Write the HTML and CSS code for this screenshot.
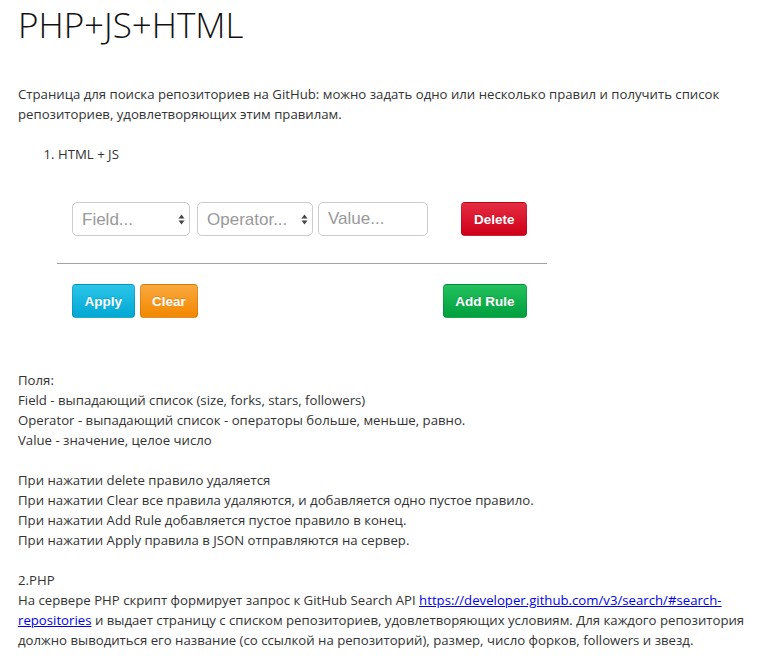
FILE: index.html
```html
<!DOCTYPE html>
<html lang="ru">
<head>
<meta charset="utf-8">
<title>PHP+JS+HTML</title>
<link rel="stylesheet" href="styles.css">
</head>
<body>
<h1 class="title">PHP+JS+HTML</h1>
<p class="intro">Страница для поиска репозиториев на GitHub: можно задать одно или несколько правил и получить список репозиториев, удовлетворяющих этим правилам.</p>
<ol class="parts">
  <li>HTML + JS
    <div class="builder">
      <div class="rule">
        <span class="select field">
          <select><option>Field...</option></select>
          <svg class="arrows" width="7" height="11" viewBox="0 0 7 11"><polygon points="0.5,4.5 3.5,0.5 6.5,4.5"/><polygon points="0.5,6.5 3.5,10.5 6.5,6.5"/></svg>
        </span>
        <span class="select operator">
          <select><option>Operator...</option></select>
          <svg class="arrows" width="7" height="11" viewBox="0 0 7 11"><polygon points="0.5,4.5 3.5,0.5 6.5,4.5"/><polygon points="0.5,6.5 3.5,10.5 6.5,6.5"/></svg>
        </span>
        <input class="value" type="text" placeholder="Value...">
        <button class="btn btn-delete">Delete</button>
      </div>
      <hr class="divider">
      <div class="actions">
        <button class="btn btn-apply">Apply</button>
        <button class="btn btn-clear">Clear</button>
        <button class="btn btn-add">Add Rule</button>
      </div>
    </div>
  </li>
</ol>
<p class="notes">Поля:<br>
Field - выпадающий список (size, forks, stars, followers)<br>
Operator - выпадающий список - операторы больше, меньше, равно.<br>
Value - значение, целое число<br>
<br>
При нажатии delete правило удаляется<br>
При нажатии Clear все правила удаляются, и добавляется одно пустое правило.<br>
При нажатии Add Rule добавляется пустое правило в конец.<br>
При нажатии Apply правила в JSON отправляются на сервер.<br>
<br>
2.PHP<br>
На сервере PHP скрипт формирует запрос к GitHub Search API <a href="#">https://developer.github.com/v3/search/#search-repositories</a> и выдает страницу с списком репозиториев, удовлетворяющих условиям. Для каждого репозитория должно выводиться его название (со ссылкой на репозиторий), размер, число форков, followers и звезд.</p>
</body>
</html>
```

FILE: styles.css
```css
html, body {
  background: #fff;
}

body {
  margin: 0;
  padding: 3px 8px 0 18px;
  font-family: "Open Sans", "Noto Sans", sans-serif;
  font-size: 13.2px;
  line-height: 20px;
  color: #333;
}

.title {
  margin: 0;
  font-size: 35px;
  line-height: 44px;
  font-weight: 300;
  color: #111;
}

.intro {
  margin: 37px 0 0;
}

.parts {
  margin: 20px 0 0;
  padding-left: 40px;
}

.builder {
  width: 490px;
  margin: 38px 0 0 -1px;
}

.rule,
.actions {
  display: flex;
  align-items: center;
  padding: 0 20px 0 15px;
}

.select {
  position: relative;
  display: block;
  height: 34px;
}

.select select,
.value {
  box-sizing: border-box;
  width: 100%;
  height: 34px;
  margin: 0;
  padding: 0 9px;
  border: 1px solid #ccc;
  border-radius: 5px;
  background: #fff;
  font-family: "Liberation Sans", Arial, sans-serif;
  font-size: 17px;
  color: #999;
  appearance: none;
  -webkit-appearance: none;
  outline: none;
}

.field {
  width: 118px;
  margin-right: 7px;
}

.operator {
  width: 116px;
  margin-right: 5px;
}

.value {
  width: 110px;
}

.value::placeholder {
  color: #999;
}

.arrows {
  position: absolute;
  right: 5px;
  top: 12px;
  fill: #444;
  pointer-events: none;
}

.btn {
  box-sizing: border-box;
  height: 34px;
  padding: 0 11.5px;
  border: 1px solid rgba(0, 0, 0, 0.12);
  border-radius: 4px;
  font-family: "Liberation Sans", Arial, sans-serif;
  font-size: 13.5px;
  font-weight: bold;
  color: #fff;
  text-shadow: 0 -1px 0 rgba(0, 0, 0, 0.15);
  cursor: pointer;
}

.btn-delete {
  margin-left: auto;
  background: linear-gradient(#e52c42, #cf0019);
}

.btn-apply {
  background: linear-gradient(#2cc4e9, #00a8d3);
}

.btn-clear {
  margin-left: 5px;
  background: linear-gradient(#f9a83f, #f48800);
}

.btn-add {
  margin-left: auto;
  background: linear-gradient(#22c15d, #00a03f);
}

.divider {
  margin: 27px 0 20px;
  border: 0;
  border-top: 1px solid #a3a3a3;
  height: 0;
}

.notes {
  margin: 52px 0 0;
}

.notes a {
  color: #0000ee;
}
```
